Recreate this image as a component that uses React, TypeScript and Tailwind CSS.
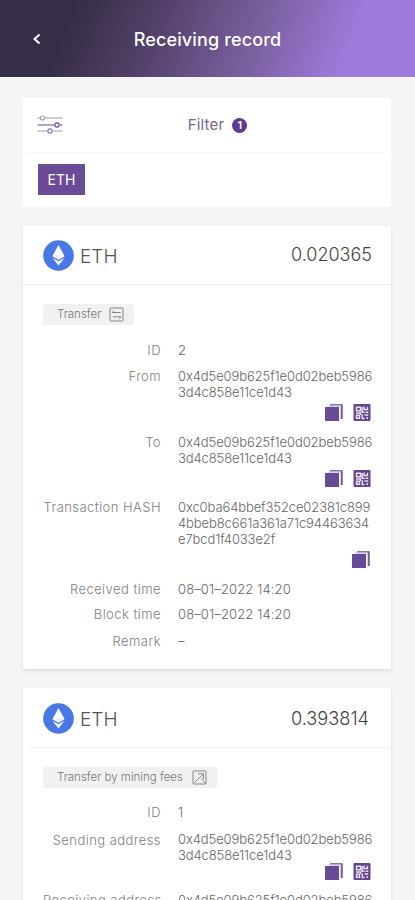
import type { ReactNode } from "react";

type IconName = "copy" | "qr";

type Row = {
  label: string;
  lines: string[];
  icons?: IconName[];
  className?: string;
  labelClassName?: string;
  valueClassName?: string;
  iconsClassName?: string;
};

const ADDRESS = ["0x4d5e09b625f1e0d02beb5986", "3d4c858e11ce1d43"];

const TRANSFER_ROWS: Row[] = [
  { label: "ID", lines: ["2"] },
  { label: "From", lines: ADDRESS, icons: ["copy", "qr"], className: "mt-2.5" },
  { label: "To", lines: ADDRESS, icons: ["copy", "qr"], className: "mt-[13px]" },
  {
    label: "Transaction HASH",
    lines: ["0xc0ba64bbef352ce02381c899", "4bbeb8c661a361a71c94463634", "e7bcd1f4033e2f"],
    icons: ["copy"],
    className: "mt-3",
    iconsClassName: "mt-1 pr-px",
  },
  {
    label: "Received time",
    lines: ["08–01–2022 14:20"],
    className: "mt-[13px]",
    valueClassName: "tracking-[0.13px]",
  },
  {
    label: "Block time",
    lines: ["08–01–2022 14:20"],
    className: "mt-[9px]",
    valueClassName: "tracking-[0.13px]",
  },
  { label: "Remark", lines: ["–"], className: "mt-[11px]" },
];

const FEE_ROWS: Row[] = [
  { label: "ID", lines: ["1"] },
  {
    label: "Sending address",
    lines: ADDRESS,
    icons: ["copy", "qr"],
    className: "mt-[11px]",
    labelClassName: "pt-px",
    iconsClassName: "mt-0 pr-px",
  },
  { label: "Receiving address", lines: ADDRESS, icons: ["copy", "qr"], className: "mt-3" },
];

function CopyIcon() {
  return (
    <svg width="18" height="17" viewBox="0 0 18 17" fill="none">
      <path d="M5 .3h12.7V15h-1.9V2.2H5z" fill="#64498f" />
      <path d="M3.5 2h12v13.5" stroke="#d9d0e8" strokeWidth="1.3" />
      <rect y="3" width="14" height="14" fill="#684b98" />
    </svg>
  );
}

function QrIcon() {
  return (
    <svg width="18" height="17" viewBox="0 0 18 17" fill="none">
      <rect x=".5" width="17" height="17" rx="1" fill="#64468f" />
      <g stroke="#e9e2f3" strokeWidth="1.4">
        <path d="M3.5 3.2h4v3.6h-4zM11 2.5v3h3.5V2.8M3 9h4.5v2M9.2 3v5.2h2.3M12.5 8.2h2.8M3.5 11.2h3v3h-3zM9.3 10.3v4.2h2.2M11.5 11h3.7M14.2 13v2" />
      </g>
    </svg>
  );
}

function EthIcon() {
  return (
    <svg width="31" height="31" viewBox="0 0 31 31">
      <circle cx="15.5" cy="15.5" r="15.3" fill="#4778e6" />
      <path d="M15.5 5 9.4 16.2l6.1 3.5 6.1-3.5z" fill="#fff" />
      <path d="m9.4 17.7 6.1 7.8 6.1-7.8-6.1 3.5z" fill="#fff" />
      <path d="m10.5 16 5-1.6 5 1.6-5 2.8z" fill="#eaf0fd" />
    </svg>
  );
}

function SlidersIcon() {
  return (
    <svg className="-mt-[3px]" width="26" height="20" viewBox="0 0 26 20" fill="none">
      <g strokeWidth="1.1">
        <path d="M.5 4h3M7.5 4h18" stroke="#9d95b3" />
        <circle cx="5.5" cy="4" r="2" stroke="#9d95b3" />
        <path d="M.5 11h17.3M22.2 11h3.3" stroke="#5f4a91" />
        <circle cx="20" cy="11" r="2.1" stroke="#5f4a91" />
        <path d="M.5 17h10.3M15.2 17h10.3" stroke="#9d95b3" />
        <circle cx="13" cy="17" r="2.1" stroke="#7f70a6" />
      </g>
    </svg>
  );
}

function TransferIcon() {
  return (
    <svg width="15" height="15" viewBox="0 0 15 15" fill="none" stroke="#858585">
      <rect x="1" y="1" width="13" height="13" rx=".8" />
      <path d="M3 5.5h8.5M3 5.5 5 3.5M4 9.8h8M12 9.8l-2 2" />
    </svg>
  );
}

function FeeIcon() {
  return (
    <svg width="15" height="15" viewBox="0 0 15 15" fill="none" stroke="#858585">
      <rect x="1" y="1" width="13" height="13" rx=".5" />
      <path d="m2.5 12.5 9-8.5M6 3.8h5.5V9M9.5 8.5l4 5" />
    </svg>
  );
}

type RecordCardProps = {
  amount: string;
  amountClassName: string;
  headerClassName: string;
  tag: string;
  tagClassName: string;
  tagIcon: ReactNode;
  rows: Row[];
  rowsClassName: string;
};

function RecordCard({
  amount,
  amountClassName,
  headerClassName,
  tag,
  tagClassName,
  tagIcon,
  rows,
  rowsClassName,
}: RecordCardProps) {
  return (
    <section className="bg-white pb-5 shadow-[0_2px_4px_rgba(0,0,0,0.09)]">
      <div className={`flex border-b ${headerClassName}`}>
        <EthIcon />
        <span className="ml-1.5 pt-[3px] text-[19px] leading-7 text-[#555]">ETH</span>
        <span className={`ml-auto pt-px leading-7 text-[#444] ${amountClassName}`}>
          {amount}
        </span>
      </div>

      <div className="px-5 pt-[19px]">
        <div className={`flex h-[21px] items-center justify-between rounded-xs bg-[#f1f1f1] pr-2.5 pl-3.5 ${tagClassName}`}>
          <span className="pt-px text-[11.5px] whitespace-nowrap text-[#777]">{tag}</span>
          {tagIcon}
        </div>

        <div className={`text-[13px] leading-4 ${rowsClassName}`}>
          {rows.map((row) => (
            <div key={row.label} className={`flex ${row.className ?? ""}`}>
              <span className={`w-[118px] shrink-0 text-right tracking-[0.45px] whitespace-nowrap text-[#808080] ${row.labelClassName ?? ""}`}>
                {row.label}
              </span>
              <div className={`ml-[17px] flex-1 text-[#666] ${row.valueClassName ?? "tracking-[-0.1px]"}`}>
                {row.lines.map((line) => (
                  <p key={line} className="whitespace-nowrap">
                    {line}
                  </p>
                ))}
                {row.icons && (
                  <div className={`flex justify-end gap-2.5 ${row.iconsClassName ?? "mt-1 pr-px"}`}>
                    {row.icons.map((icon) =>
                      icon === "copy" ? <CopyIcon key={icon} /> : <QrIcon key={icon} />,
                    )}
                  </div>
                )}
              </div>
            </div>
          ))}
        </div>
      </div>
    </section>
  );
}

export default function App() {
  return (
    <main className="flex h-[900px] w-[415px] flex-col overflow-hidden bg-[#f5f5f5] font-['Inter',sans-serif] font-light">
      <header className="grid h-[77px] shrink-0 grid-cols-[1fr_auto_1fr] items-center bg-[linear-gradient(112deg,#362d46_17%,#4d3d63_34%,#7a609f_61%,#9d79da_82%)] text-white">
        <svg className="ml-8" width="10" height="14" viewBox="0 0 10 14" fill="none">
          <path d="M7.5 2.5 2.5 7l5 4.5" stroke="#fff" strokeWidth="2" />
        </svg>
        <h1 className="pt-0.5 text-[18px] font-medium tracking-[0.15px]">Receiving record</h1>
      </header>

      <div className="flex flex-col gap-[19px] pt-[21px] pr-6 pl-[23px]">
        <section className="h-[109px] shrink-0 bg-white">
          <div className="mx-1.5 grid h-[55px] grid-cols-[1fr_auto_1fr] items-center border-b border-[#f6f6f6] px-2">
            <SlidersIcon />
            <div className="flex items-center gap-2 pl-[21px]">
              <span className="text-[15px] font-normal tracking-[0.2px] text-[#75668f]">Filter</span>
              <span className="flex size-[15px] items-center justify-center rounded-full bg-[#5d3b90] text-[11px] font-semibold text-white">
                1
              </span>
            </div>
          </div>
          <span className="mt-[11px] ml-[15px] flex h-[31px] w-[47px] items-center justify-center bg-[#694b98] text-[14px] font-normal text-white">
            ETH
          </span>
        </section>

        <RecordCard
          amount="0.020365"
          amountClassName="pr-[19px] text-[18px]"
          headerClassName="h-[59px] border-[#efefef] pt-[14px] pl-5"
          tag="Transfer"
          tagClassName="w-[91px]"
          tagIcon={<TransferIcon />}
          rows={TRANSFER_ROWS}
          rowsClassName="mt-[17px]"
        />
        <RecordCard
          amount="0.393814"
          amountClassName="pr-[22px] text-[18.2px]"
          headerClassName="mx-1.5 h-[60px] border-[#f3f3f3] pt-[15px] pl-3.5 -mr-0"
          tag="Transfer by mining fees"
          tagClassName="w-[174px]"
          tagIcon={<FeeIcon />}
          rows={FEE_ROWS}
          rowsClassName="mt-4"
        />
      </div>
    </main>
  );
}
